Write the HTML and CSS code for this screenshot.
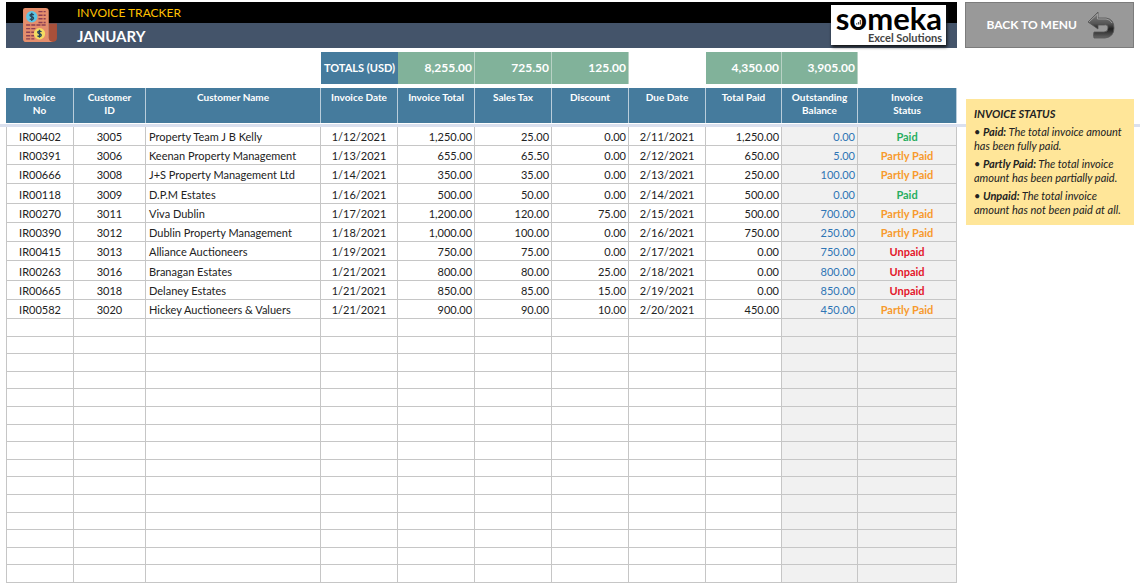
FILE: index.html
```html
<!DOCTYPE html>
<html lang="en">
<head>
<meta charset="utf-8">
<title>Invoice Tracker - January</title>
<meta name="viewport" content="width=device-width, initial-scale=1">
<link rel="stylesheet" href="styles.css">
</head>
<body>
<div class="page">
<main class="sheet">
<header class="banner">
<svg class="banner-icon" viewBox="0 0 35 35" aria-hidden="true">
<path d="M26 16h8v14q0 4-4 4h-4z" fill="#a9503a"/>
<path d="M3 1h20q3 0 3 3v26q0 4 4 4H4q-3 0-3-3V3q0-2 2-2z" fill="#e58e6c"/>
<g stroke="#8c3f52" stroke-width="1.4" stroke-dasharray="4 1"><path d="M16 4.500h7M16 8h7M16 11.500h7M16 15h7M4 17.500h19M4 21h9M4 24.500h8M4 28h8M4 31h8"/></g>
<circle cx="9.500" cy="9.500" r="5.500" fill="#5cc5e6"/>
<circle cx="17" cy="26" r="5.500" fill="#f4dc62"/>
<g fill="none" stroke="#27465c" stroke-width="1.300"><path d="M11.500 7.600q-2-1.200-3.400-.3-1 1.300 1.300 2.100 2.600.8 1.500 2.300-1.300 1-3.400-.2M9.500 5.500v8"/><path d="M19 24.100q-2-1.200-3.400-.3-1 1.300 1.300 2.100 2.600.8 1.500 2.300-1.300 1-3.400-.2M17 22v8"/></g>
</svg>
<div class="banner-titles">
<p class="banner-kicker">INVOICE TRACKER</p>
<h1 class="banner-month">JANUARY</h1>
</div>
<div class="brand">
<span class="brand-name">s<span class="brand-o">o<svg class="brand-chart" viewBox="0 0 8 8" aria-hidden="true"><path d="M0 7h2V5H0zM3 7h2V3H3zM6 7h2V0H6z" fill="#555"/></svg></span>meka</span>
<span class="brand-tag">Excel Solutions</span>
</div>
</header>
<table class="invoices">
<colgroup><col class="w-no"><col class="w-id"><col class="w-name"><col class="w-std"><col class="w-std"><col class="w-std"><col class="w-std"><col class="w-std"><col class="w-paid"><col class="w-paid"><col class="w-status"></colgroup>
<thead>
<tr class="totals"><td colspan="3"></td><th class="totals-label" scope="row">TOTALS (USD)</th><td class="total">8,255.00</td><td class="total">725.50</td><td class="total">125.00</td><td></td><td class="total">4,350.00</td><td class="total">3,905.00</td><td></td></tr>
<tr class="gap"><td colspan="11"></td></tr>
<tr class="heads"><th scope="col">Invoice<br>No</th><th scope="col">Customer<br>ID</th><th scope="col">Customer Name</th><th scope="col">Invoice Date</th><th scope="col">Invoice Total</th><th scope="col">Sales Tax</th><th scope="col">Discount</th><th scope="col">Due Date</th><th scope="col">Total Paid</th><th scope="col">Outstanding<br>Balance</th><th scope="col">Invoice<br>Status</th></tr>
<tr class="freeze"><td colspan="11"></td></tr>
</thead>
<tbody class="filled">
<tr><td>IR00402</td><td>3005</td><td>Property Team J B Kelly</td><td>1/12/2021</td><td>1,250.00</td><td>25.00</td><td>0.00</td><td>2/11/2021</td><td>1,250.00</td><td>0.00</td><td class="paid">Paid</td></tr>
<tr><td>IR00391</td><td>3006</td><td>Keenan Property Management</td><td>1/13/2021</td><td>655.00</td><td>65.50</td><td>0.00</td><td>2/12/2021</td><td>650.00</td><td>5.00</td><td class="partly">Partly Paid</td></tr>
<tr><td>IR00666</td><td>3008</td><td>J+S Property Management Ltd</td><td>1/14/2021</td><td>350.00</td><td>35.00</td><td>0.00</td><td>2/13/2021</td><td>250.00</td><td>100.00</td><td class="partly">Partly Paid</td></tr>
<tr><td>IR00118</td><td>3009</td><td>D.P.M Estates</td><td>1/16/2021</td><td>500.00</td><td>50.00</td><td>0.00</td><td>2/14/2021</td><td>500.00</td><td>0.00</td><td class="paid">Paid</td></tr>
<tr><td>IR00270</td><td>3011</td><td>Viva Dublin</td><td>1/17/2021</td><td>1,200.00</td><td>120.00</td><td>75.00</td><td>2/15/2021</td><td>500.00</td><td>700.00</td><td class="partly">Partly Paid</td></tr>
<tr><td>IR00390</td><td>3012</td><td>Dublin Property Management</td><td>1/18/2021</td><td>1,000.00</td><td>100.00</td><td>0.00</td><td>2/16/2021</td><td>750.00</td><td>250.00</td><td class="partly">Partly Paid</td></tr>
<tr><td>IR00415</td><td>3013</td><td>Alliance Auctioneers</td><td>1/19/2021</td><td>750.00</td><td>75.00</td><td>0.00</td><td>2/17/2021</td><td>0.00</td><td>750.00</td><td class="unpaid">Unpaid</td></tr>
<tr><td>IR00263</td><td>3016</td><td>Branagan Estates</td><td>1/21/2021</td><td>800.00</td><td>80.00</td><td>25.00</td><td>2/18/2021</td><td>0.00</td><td>800.00</td><td class="unpaid">Unpaid</td></tr>
<tr><td>IR00665</td><td>3018</td><td>Delaney Estates</td><td>1/21/2021</td><td>850.00</td><td>85.00</td><td>15.00</td><td>2/19/2021</td><td>0.00</td><td>850.00</td><td class="unpaid">Unpaid</td></tr>
<tr><td>IR00582</td><td>3020</td><td>Hickey Auctioneers &amp; Valuers</td><td>1/21/2021</td><td>900.00</td><td>90.00</td><td>10.00</td><td>2/20/2021</td><td>450.00</td><td>450.00</td><td class="partly">Partly Paid</td></tr>
</tbody>
<tbody class="blank">
<tr><td></td><td></td><td></td><td></td><td></td><td></td><td></td><td></td><td></td><td></td><td></td></tr>
<tr><td></td><td></td><td></td><td></td><td></td><td></td><td></td><td></td><td></td><td></td><td></td></tr>
<tr><td></td><td></td><td></td><td></td><td></td><td></td><td></td><td></td><td></td><td></td><td></td></tr>
<tr><td></td><td></td><td></td><td></td><td></td><td></td><td></td><td></td><td></td><td></td><td></td></tr>
<tr><td></td><td></td><td></td><td></td><td></td><td></td><td></td><td></td><td></td><td></td><td></td></tr>
<tr><td></td><td></td><td></td><td></td><td></td><td></td><td></td><td></td><td></td><td></td><td></td></tr>
<tr><td></td><td></td><td></td><td></td><td></td><td></td><td></td><td></td><td></td><td></td><td></td></tr>
<tr><td></td><td></td><td></td><td></td><td></td><td></td><td></td><td></td><td></td><td></td><td></td></tr>
<tr><td></td><td></td><td></td><td></td><td></td><td></td><td></td><td></td><td></td><td></td><td></td></tr>
<tr><td></td><td></td><td></td><td></td><td></td><td></td><td></td><td></td><td></td><td></td><td></td></tr>
<tr><td></td><td></td><td></td><td></td><td></td><td></td><td></td><td></td><td></td><td></td><td></td></tr>
<tr><td></td><td></td><td></td><td></td><td></td><td></td><td></td><td></td><td></td><td></td><td></td></tr>
<tr><td></td><td></td><td></td><td></td><td></td><td></td><td></td><td></td><td></td><td></td><td></td></tr>
<tr><td></td><td></td><td></td><td></td><td></td><td></td><td></td><td></td><td></td><td></td><td></td></tr>
<tr><td></td><td></td><td></td><td></td><td></td><td></td><td></td><td></td><td></td><td></td><td></td></tr>
</tbody>
</table>
</main>
<aside class="side">
<button class="back" type="button">BACK TO MENU
<svg class="back-icon" viewBox="0 0 28 28" aria-hidden="true">
<defs><linearGradient id="arrow" x1="0" y1="0" x2="0" y2="1"><stop offset="0" stop-color="#858585"/><stop offset=".45" stop-color="#555"/><stop offset=".65" stop-color="#1f1f1f"/><stop offset="1" stop-color="#666"/></linearGradient></defs>
<path d="M1 11 11 1v6h8q8 1 8 10 0 9-9 10H7q-1-4 0-6h10q4 0 4-4t-4-3h-6v4z" fill="url(#arrow)" stroke="#555" stroke-width=".8" stroke-linejoin="round"/>
<path d="M2 11 10.500 3v5H19q4 .3 6 4" fill="none" stroke="#aaa" stroke-width=".8"/>
</svg>
</button>
<section class="note">
<h2 class="note-title">INVOICE STATUS</h2>
<p>• <b>Paid:</b> The total invoice amount has been fully paid.</p>
<p>• <b>Partly Paid:</b> The total invoice amount has been partially paid.</p>
<p>• <b>Unpaid:</b> The total invoice amount has not been paid at all.</p>
</section>
</aside>
</div>
</body>
</html>
```
FILE: styles.css
```css
* { box-sizing: border-box; }

body {
  margin: 0;
  background: #fff;
  color: #222;
  font: 11px/14px Lato, "Liberation Sans", sans-serif;
  overflow-x: hidden;
}

h1, h2, p { margin: 0; }

.page {
  display: grid;
  grid-template-columns: minmax(0, 1fr) 169px;
  gap: 8px;
  padding: 2px 6px 0;
}

.banner {
  display: flex;
  align-items: center;
  height: 46px;
  padding: 0 11px 0 16px;
  background: linear-gradient(#000 21px, #44546a 21px);
}

.banner-icon { width: 36px; height: 36px; }

.banner-titles {
  flex: 1;
  align-self: stretch;
  padding-left: 19px;
}

.banner-kicker {
  color: #ffc000;
  font-size: 12px;
  line-height: 22px;
}

.banner-month {
  color: #fff;
  font-size: 15px;
  line-height: 24px;
}

.brand {
  display: flex;
  flex-direction: column;
  align-items: flex-end;
  width: 115px;
  height: 40px;
  padding: 0 4px;
  background: #fff;
  color: #000;
  box-shadow: 1px 2px 3px #111;
}

.brand-name {
  font-size: 31px;
  font-weight: 700;
  line-height: 27px;
}

.brand-o { position: relative; }

.brand-chart {
  position: absolute;
  left: 7px;
  bottom: 12px;
  width: 5px;
  height: 5px;
}

.brand-tag {
  color: #444;
  font-size: 11px;
  font-weight: 700;
  line-height: 12px;
}

.invoices {
  width: 100%;
  margin-top: 4px;
  border-spacing: 0;
  table-layout: fixed;
}

.w-no { width: 68px; }
.w-id { width: 72px; }
.w-name { width: 175px; }
.w-std { width: 77px; }
.w-paid { width: 76px; }
.w-status { width: 99px; }

.invoices th, .invoices td { padding: 0 2px; }

.totals { height: 32px; }

.totals .totals-label {
  background: #457b9d;
  color: #fff;
  font-size: 11px;
  white-space: nowrap;
}

.invoices .total {
  border-right: 1px solid #b9d2c5;
  background: #81b29a;
  color: #fff;
  font-size: 12px;
  font-weight: 700;
  text-align: right;
}

.gap { height: 4px; }

.heads { height: 35px; }

.invoices .heads th {
  padding-top: 3px;
  border-right: 1px solid #b9cddb;
  background: #457b9d;
  color: #fff;
  font-size: 10px;
  line-height: 13px;
  vertical-align: top;
}

.freeze { height: 4px; }

.freeze td { position: relative; }

.freeze td::before {
  content: "";
  position: absolute;
  top: 1px;
  left: -6px;
  width: 100vw;
  height: 3px;
  background: #dae0ee;
}

.filled td, .blank td {
  border: solid #c6c6c6;
  border-width: 0 1px 1px 0;
  text-align: right;
  white-space: nowrap;
}

.invoices .filled td { padding-top: 2px; }

.invoices tbody td:first-child { border-left-width: 1px; }

.filled tr { height: 19px; }
.filled tr:nth-child(4n) { height: 20px; }
.blank tr { height: 18px; }
.blank tr:nth-child(5n + 2), .blank tr:nth-child(5n + 4) { height: 17px; }

.invoices tbody td:nth-child(1),
.invoices tbody td:nth-child(2),
.invoices tbody td:nth-child(4),
.invoices tbody td:nth-child(8),
.invoices tbody td:nth-child(11) { text-align: center; }

.invoices tbody td:nth-child(3) {
  padding-left: 3px;
  text-align: left;
}

.invoices tbody td:nth-child(n + 10) { background: #f1f1f1; }

.invoices tbody td:nth-child(10) { color: #2f75b5; }

.paid, .partly, .unpaid { font-weight: 700; }
.paid { color: #27ae60; }
.partly { color: #f79a2d; }
.unpaid { color: #e3172a; }

.back {
  display: flex;
  align-items: center;
  justify-content: flex-end;
  gap: 10px;
  width: 100%;
  height: 46px;
  padding: 0 18px 0 0;
  border: 1px solid #7c7c7c;
  background: #999;
  color: #fff;
  font: 700 12px/16px Lato, "Liberation Sans", sans-serif;
}

.back-icon { width: 28px; height: 28px; }

.note {
  position: relative;
  z-index: 1;
  display: grid;
  gap: 4px;
  margin: 51px 0 0 1px;
  padding: 7px 8px 8px;
  background: #ffe699;
  font-size: 11px;
  font-style: italic;
}

.note-title { font-size: 11px; line-height: 15px; }
```
